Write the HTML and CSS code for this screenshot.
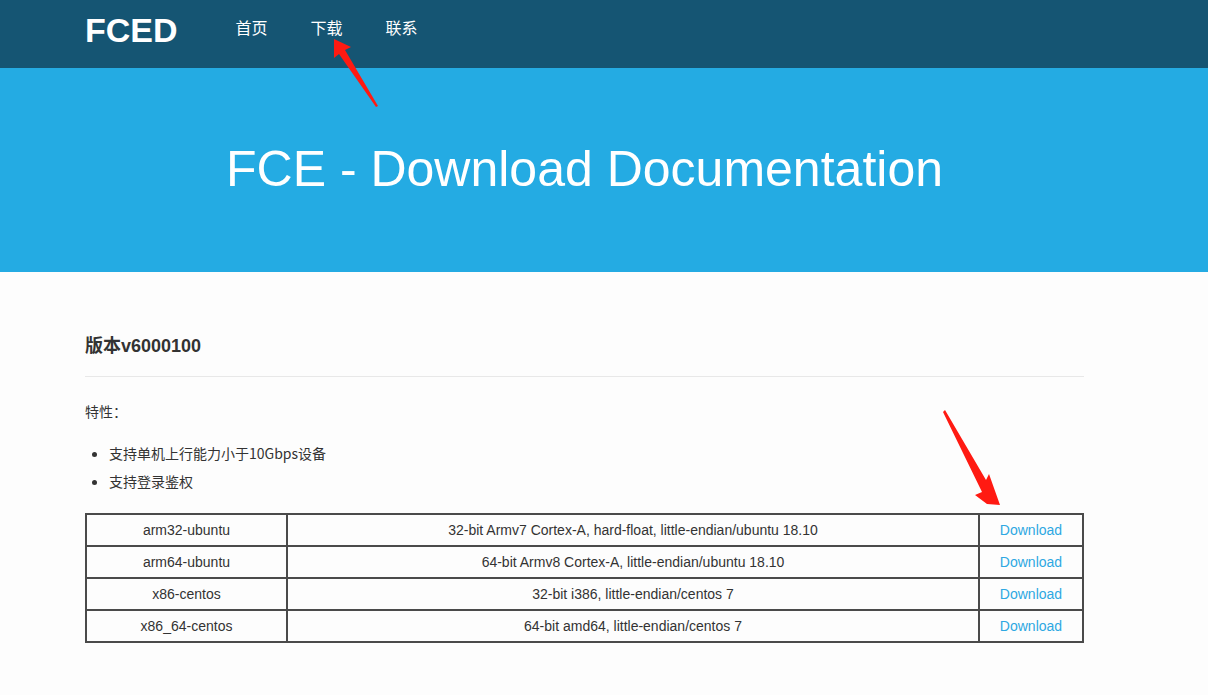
FILE: index.html
```html
<!DOCTYPE html>
<html lang="zh-CN">
<head>
<meta charset="utf-8">
<title>FCED - Download</title>
<link rel="stylesheet" href="styles.css">
</head>
<body>
<header class="topbar">
  <div class="container topbar-inner">
    <div class="logo">FCED</div>
    <nav class="nav">
      <a href="#">首页</a>
      <a href="#">下载</a>
      <a href="#">联系</a>
    </nav>
  </div>
</header>
<section class="hero">
  <div class="container">
    <h1 class="hero-title">FCE - Download Documentation</h1>
  </div>
</section>
<main class="container content">
  <h2 class="version">版本v6000100</h2>
  <hr class="divider">
  <p class="features-label">特性：</p>
  <ul class="features">
    <li>支持单机上行能力小于10Gbps设备</li>
    <li>支持登录鉴权</li>
  </ul>
  <table class="downloads">
    <tr><td class="c-name">arm32-ubuntu</td><td>32-bit Armv7 Cortex-A, hard-float, little-endian/ubuntu 18.10</td><td class="c-link"><a href="#">Download</a></td></tr>
    <tr><td class="c-name">arm64-ubuntu</td><td>64-bit Armv8 Cortex-A, little-endian/ubuntu 18.10</td><td class="c-link"><a href="#">Download</a></td></tr>
    <tr><td class="c-name">x86-centos</td><td>32-bit i386, little-endian/centos 7</td><td class="c-link"><a href="#">Download</a></td></tr>
    <tr><td class="c-name">x86_64-centos</td><td>64-bit amd64, little-endian/centos 7</td><td class="c-link"><a href="#">Download</a></td></tr>
  </table>
</main>
<svg class="arrow arrow-nav" width="60" height="70" viewBox="0 0 60 70">
  <polygon points="13,1 30,9 24,12 57,68 55,69 18,16 13,20" fill="#ff1a12"/>
</svg>
<svg class="arrow arrow-table" width="70" height="100" viewBox="0 0 70 100">
  <polygon points="8,2 49,72 52,66 63,97 50,96 38,87 45,84 6,4" fill="#ff1a12"/>
</svg>
</body>
</html>
```
FILE: styles.css
```css
* { box-sizing: border-box; }
html, body { margin: 0; padding: 0; }
body {
  background: #fdfdfd;
  font-family: "Liberation Sans", Arial, "Noto Sans CJK SC", sans-serif;
  color: #333;
  font-size: 14px;
}
.container {
  width: 999px;
  margin-left: 85px;
}
.topbar {
  background: #155573;
  height: 68px;
}
.topbar-inner {
  display: flex;
  align-items: center;
  height: 68px;
}
.logo {
  color: #fff;
  font-weight: bold;
  font-size: 34px;
  line-height: 1;
  margin-top: -8px;
}
.nav {
  display: flex;
  gap: 43px;
  margin-left: 58px;
  margin-top: -15px;
}
.nav a {
  color: #fff;
  text-decoration: none;
  font-size: 16px;
  font-family: "Noto Sans CJK SC", sans-serif;
}
.hero {
  background: #24abe3;
  height: 204px;
  display: flex;
  align-items: center;
}
.hero-title {
  margin: 0;
  text-align: center;
  color: #fff;
  font-weight: normal;
  font-size: 50px;
  line-height: 1;
  margin-top: -2px;
}
.content {
  padding-top: 62px;
}
.version {
  margin: 0;
  font-size: 18px;
  font-weight: bold;
  line-height: 24px;
  color: #333;
}
.divider {
  border: 0;
  border-top: 1px solid #e8e8e8;
  margin: 18px 0 0;
}
.features-label {
  margin: 24px 0 0;
  line-height: 20px;
  font-family: "Noto Sans CJK SC", sans-serif;
  font-size: 14px;
}
.features {
  margin: 18px 0 0;
  padding-left: 24px;
  font-family: "Noto Sans CJK SC", sans-serif;
  font-size: 14px;
  line-height: 28px;
}
.downloads {
  margin-top: 18px;
  width: 999px;
  border-collapse: collapse;
  border: 2px solid #4a4a4a;
}
.downloads td {
  border: 2px solid #4a4a4a;
  height: 32px;
  text-align: center;
  padding: 0;
  color: #333;
  font-size: 14px;
}
.downloads .c-name { width: 201px; }
.downloads .c-link { width: 104px; }
.downloads a {
  color: #2ea8e2;
  text-decoration: none;
}
.arrow {
  position: absolute;
}
.arrow-nav { left: 321px; top: 38px; }
.arrow-table { left: 937px; top: 408px; }
```
